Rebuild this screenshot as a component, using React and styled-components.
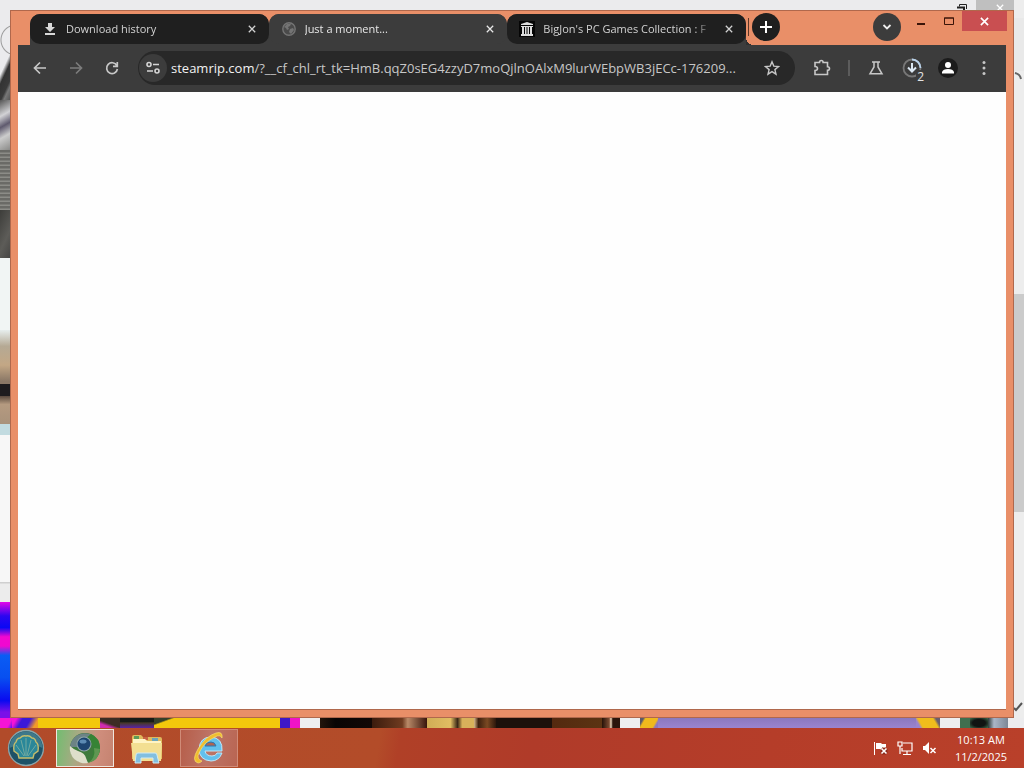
import React from 'react';
import styled, { createGlobalStyle } from 'styled-components';

const GlobalStyle = createGlobalStyle`
	* {
		box-sizing: border-box;
	}

	body {
		margin: 0;
		font-family: "Open Sans", "Noto Sans", sans-serif;
		overflow: hidden;
	}

	button {
		border: 0;
		padding: 0;
		background: none;
		color: inherit;
		font: inherit;
	}

	svg {
		display: block;
		flex: none;
	}
`;

const Desktop = styled.div`
	height: 100vh;
	display: flex;
	flex-direction: column;
`;

/* The browser window is stacked on the page behind it */
const Stage = styled.main`
	flex: 1;
	min-height: 0;
	display: grid;
	grid-template: minmax(0, 1fr) / minmax(0, 1fr);

	> * {
		grid-area: 1 / 1;
	}
`;

const Backdrop = styled.div`
	display: flex;
	flex-direction: column;
	background: #f4f4f4;
`;

const BackRow = styled.div`
	flex: 1;
	min-height: 0;
	display: flex;
	justify-content: space-between;
	background: #ebebed;
`;

const Edge = styled.div`
	width: 10px;
	display: flex;
	flex-direction: column;
`;

const Slice = styled.div`
	height: ${props => props.$height}px;
	flex: ${props => (props.$grow ? 1 : 'none')};
	background: ${props => props.$fill};
`;

const BackControls = styled.div`
	flex: 1;
	display: flex;
	justify-content: flex-end;
	align-items: flex-start;
	gap: 9px;
`;

const BackClose = styled.div`
	width: 48px;
	height: 18px;
	display: flex;
	justify-content: center;
	padding-top: 4px;
	background: #bfbfbf;
`;

const ScrollTrack = styled.div`
	width: 10px;
	margin-left: -10px;
	padding-top: 18px;
	display: flex;
	flex-direction: column;
	background: #ededed;
`;

const Thumbs = styled.div`
	height: 10px;
	display: flex;
	background: #f0f0f0;
`;

const Thumb = styled.div`
	flex: ${props => props.$size} 1 0;
	background: ${props => props.$fill};
`;

const Window = styled.section`
	position: relative;
	margin: 10px;
	display: flex;
	flex-direction: column;
	padding: 0 7px 7px;
	border: 1px solid #b0684c;
	background: #e98f68;
`;

const TitleBar = styled.header`
	height: 34px;
	display: flex;
	align-items: flex-start;
`;

const TabStrip = styled.div`
	position: relative;
	flex: 0 1 728px;
	min-width: 0;
	height: 34px;
	padding: 3px 0 0 12px;
	display: flex;

	/* Curve from the last tab into the toolbar */
	&::after {
		content: "";
		position: absolute;
		left: 100%;
		bottom: 0;
		width: 8px;
		height: 8px;
		background: radial-gradient(circle at 100% 0, transparent 8px, #303030 8px);
	}
`;

const Tab = styled.div`
	flex: 1 1 0;
	min-width: 0;
	height: 31px;
	background: #3c3c3c;
	border-radius: 10px 10px 0 0;
`;

const TabBody = styled.div`
	height: 30px;
	padding: 0 11px 0 12px;
	display: flex;
	align-items: center;
	gap: 8px;
	border-radius: 10px;
	color: ${props => (props.$active ? '#e8e8e8' : '#d2d2d2')};
	background: ${props => (props.$active ? '#3c3c3c' : '#1f1f1f')};
`;

const TabTitle = styled.button`
	flex: 1;
	min-width: 0;
	overflow: hidden;
	white-space: nowrap;
	text-align: left;
	font-size: 11px;
	line-height: 18px;
	mask-image: linear-gradient(to right, #000 calc(100% - 20px), transparent calc(100% - 4px));
`;

const CloseTab = styled.button`
	width: 12px;
	height: 16px;
	display: flex;
	align-items: center;
	justify-content: center;
`;

const Divider = styled.div`
	width: ${props => (props.$wide ? 2 : 1)}px;
	height: ${props => (props.$wide ? 16 : 18)}px;
	background: ${props => props.$fill};
`;

const StripTools = styled.div`
	height: 34px;
	padding: 0 0 2px 2px;
	display: flex;
	align-items: center;
	gap: 3px;
`;

const RoundButton = styled.button`
	width: 28px;
	height: 28px;
	display: flex;
	align-items: center;
	justify-content: center;
	border-radius: 50%;
	background: ${props => props.$fill};
`;

const Caption = styled.div`
	margin: 0 -1px 0 auto;
	display: flex;
	align-items: flex-start;
`;

const SearchTabs = styled.div`
	padding: 2px 7px 0 0;
`;

const CaptionButton = styled.button`
	width: ${props => (props.$close ? 45 : 27)}px;
	height: 20px;
	display: flex;
	align-items: center;
	justify-content: center;
	background: ${props => (props.$close ? '#c94f51' : 'none')};
`;

const Toolbar = styled.div`
	height: 47px;
	padding: 0 8px 1px;
	display: flex;
	align-items: center;
	color: #c7c7c7;
	background: #3c3c3c;
`;

const ToolButton = styled.button`
	position: relative;
	width: 28px;
	height: 28px;
	display: flex;
	align-items: center;
	justify-content: center;
	color: ${props => (props.$dim ? '#7c7c7c' : 'inherit')};
`;

const Group = styled.div`
	display: flex;
	align-items: center;
	gap: ${props => props.$gap}px;
`;

const AddressBar = styled.div`
	flex: 1;
	min-width: 0;
	height: 34px;
	margin: 0 13px 0 12px;
	padding: 0 9px 0 1px;
	display: flex;
	align-items: center;
	gap: 4px;
	border-radius: 17px;
	background: #282828;
`;

const Address = styled.a`
	flex: 1;
	min-width: 0;
	overflow: hidden;
	text-overflow: ellipsis;
	white-space: nowrap;
	text-decoration: none;
	font-size: 13px;
	line-height: 20px;
	color: #c7c7c7;
`;

const Host = styled.span`
	color: #f2f2f2;
`;

const Badge = styled.span`
	position: absolute;
	right: 1px;
	bottom: -1px;
	padding: 0 1px;
	font-size: 12px;
	line-height: 13px;
	color: #e3e3e3;
	background: #3c3c3c;
`;

const Page = styled.div`
	flex: 1;
	background: #fefefe;
	border-bottom: 1px solid #b0684c;
`;

const Taskbar = styled.footer`
	height: 40px;
	display: flex;
	align-items: center;
	padding: 0 17px 0 7px;
	color: #fff;
	background: linear-gradient(100deg, #b14b2a 0%, #b34c29 37%, #b04027 39%, #b03b29 52%, #b53d29 75%, #b9402a 100%);
`;

const TaskButton = styled.button`
	width: ${props => (props.$start ? 41 : 58)}px;
	height: 38px;
	margin-right: ${props => (props.$start ? 8 : 4)}px;
	display: flex;
	align-items: center;
	justify-content: ${props => (props.$start ? 'flex-start' : 'center')};
	border: ${props => (props.$border ? `1px solid ${props.$border}` : 0)};
	background: ${props => props.$fill || 'none'};
`;

const Tray = styled.div`
	margin-left: auto;
	display: flex;
	align-items: center;
	gap: 8px;
`;

const Clock = styled.time`
	margin-left: 10px;
	text-align: center;
	font-size: 11px;
	line-height: 17px;
`;

const Cross = ({ size, width = 1.6, color = 'currentColor' }) => (
	<svg width={size} height={size} viewBox="0 0 10 10" stroke={color} strokeWidth={width}>
		<path d="M1 1l8 8M9 1L1 9" />
	</svg>
);

const DownloadIcon = () => (
	<svg width="16" height="16" viewBox="0 0 16 16" fill="#d8d8d8">
		<path d="M6 2h4v4h3l-5 5-5-5h3zM3 12h10v2H3z" />
	</svg>
);

const GlobeIcon = () => (
	<svg width="16" height="16" viewBox="0 0 16 16">
		<circle cx="8" cy="8" r="6.2" fill="#4a4a4a" stroke="#747474" strokeWidth="1.4" />
		<path d="M3 6l3-3 4 0-1 2-2 1 1 2-2 1-1-2zM9 8l3-1 1 2-3 4-2-2z" fill="#747474" />
	</svg>
);

const ArchiveIcon = () => (
	<svg width="16" height="16" viewBox="0 0 16 16">
		<path d="M0 0h16v16H0z" fill="#050505" />
		<path d="M8 1l6 2v1H2V3zM2 5h12v1H2zM3 6h2v7H3zM6 6h1.500v7H6zM8.500 6H10v7H8.500zM11 6h2v7h-2zM2 13h12v2H2z" fill="#ddd" />
	</svg>
);

const tabs = [
	{ title: 'Download history', icon: <DownloadIcon /> },
	{ title: 'Just a moment...', icon: <GlobeIcon />, active: true },
	{ title: "BigJon's PC Games Collection : F", icon: <ArchiveIcon /> },
];

const thumbs = [
	[12, 'linear-gradient(120deg, #f514d6 70%, #5a10e8)'],
	[26, 'linear-gradient(120deg, #f514d6 15%, #3b18d8 35%, #3b18d8 60%, #f39a28 85%)'],
	[62, '#f3c80c'],
	[20, 'linear-gradient(200deg, #3b2c24 55%, #d02cae 75%)'],
	[34, 'linear-gradient(#181b18 35%, #473829 50%, #5a22a8)'],
	[20, 'linear-gradient(160deg, #36402a 35%, #f3c80c 45%)'],
	[106, '#f3c80c'],
	[10, '#3d18c8'],
	[10, '#f014c8'],
	[20, '#eeeeef'],
	[52, 'linear-gradient(90deg, #23150c, #090504 30%, #120806)'],
	[55, 'linear-gradient(90deg, #3b1b0d, #6f3b20 55%, #b98a68 65%, #38150c)'],
	[47, 'linear-gradient(90deg, #d0ad56, #e1bd62 50%, #3a2716 65%, #d8b15a 75%)'],
	[22, 'linear-gradient(90deg, #d9b88a, #3d200f 20%, #7a4922 60%, #2d170c)'],
	[56, '#1d110b'],
	[50, 'linear-gradient(90deg, #54290f, #5b3413)'],
	[18, 'linear-gradient(90deg, #241108, #7a4b31 40%, #ecd9bf 50%, #2a150c 60%)'],
	[20, '#eeeeef'],
	[18, 'linear-gradient(120deg, #5c5a6a 15%, #f0b91c 25%, #f0b91c 75%, #8c78c0 85%)'],
	[258, 'linear-gradient(#8a78be, #9a84cf)'],
	[24, 'linear-gradient(60deg, #9a84cf 15%, #f0bd1c 25%, #f0bd1c 75%, #6b6070 85%)'],
	[20, '#eeeeef'],
	[10, '#3f6f4f'],
	[18, 'radial-gradient(#101412 50%, #3f6f4f)'],
	[20, 'linear-gradient(90deg, #2c3a38, #aab6c8 30%, #7b8796)'],
	[16, '#ececee'],
];

const LeftPictures = () => (
	<Edge>
		<Slice $height={55} $fill="radial-gradient(circle at 16px 40px, #ebebed 14px, #9c9c9c 15px, #ebebed 16px)" />
		<Slice $height={45} $fill="linear-gradient(115deg, #ebebed 30%, #333 45%, #3a3a3a 70%, #777 80%, #555)" />
		<Slice $height={50} $fill="linear-gradient(150deg, #555, #d2d2d5 30%, #5f5a6e 50%, #ccc 70%, #8a8a88)" />
		<Slice $height={60} $fill="repeating-linear-gradient(#6a6a66 0 2px, #8c8c87 3px 4px)" />
		<Slice $height={48} $fill="linear-gradient(115deg, #3d3d3a, #5d5c58 60%, #474644)" />
		<Slice $height={72} $fill="#f1f5f4" />
		<Slice $height={54} $fill="linear-gradient(#e7eeed, #b5a994 30%, #c3a785 65%, #8a7766 95%)" />
		<Slice $height={12} $fill="#1d1b1e" />
		<Slice $height={28} $fill="linear-gradient(#59493e, #b59a80 30%, #a9927b)" />
		<Slice $height={11} $fill="#c2dbe0" />
		<Slice $height={147} $fill="#f7f7f7" />
		<Slice $height={20} $fill="linear-gradient(#cfcfcf 1px, #ececec 2px)" />
		<Slice $grow $fill="linear-gradient(#e408e8, #2c06f0 12%, #0a08f4 22%, #f208d0 30%, #f008d0 38%, #0a5cf4 46%, #0850f0 65%, #0a0af0 85%, #7a10e8 95%)" />
	</Edge>
);

function PageBehind() {
	return (
		<Backdrop aria-hidden="true">
			<BackRow>
				<LeftPictures />
				<BackControls>
					<svg width="10" height="12" viewBox="0 0 10 12" fill="none" stroke="#222">
						<path d="M2.500 6.500v-2h7V9" />
						<path d="M0 7.500h7V12" strokeWidth="2" />
					</svg>
					<BackClose>
						<Cross size={8} color="#fff" />
					</BackClose>
				</BackControls>
				<ScrollTrack>
					<Slice $height={53} $fill="#e9e9e9" />
					<svg width="10" height="10" viewBox="0 0 10 10" fill="none" stroke="#666" strokeWidth="2">
						<path d="M1 2q5 1 6 6" />
					</svg>
					<Slice $height={213} $fill="#ededed" />
					<Slice $height={218} $fill="#cbcbcb" />
					<Slice $height={190} $fill="#ededed" />
					<svg width="10" height="10" viewBox="0 0 10 10" fill="none" stroke="#555" strokeWidth="2">
						<path d="M0 6l2 2 6-7" />
					</svg>
				</ScrollTrack>
			</BackRow>
			<Thumbs>
				{thumbs.map(([size, fill], i) => (
					<Thumb key={i} $size={size} $fill={fill} />
				))}
			</Thumbs>
		</Backdrop>
	);
}

function BrowserTabs() {
	return (
		<TabStrip>
			{tabs.map(tab => (
				<Tab key={tab.title}>
					<TabBody $active={tab.active}>
						{tab.icon}
						<TabTitle>{tab.title}</TabTitle>
						<CloseTab aria-label="Close tab">
							<Cross size={8} />
						</CloseTab>
					</TabBody>
				</Tab>
			))}
		</TabStrip>
	);
}

function BrowserToolbar() {
	return (
		<Toolbar>
			<Group $gap={8}>
				<ToolButton aria-label="Back">
					<svg width="16" height="16" viewBox="0 0 16 16" fill="none" stroke="currentColor" strokeWidth="1.7">
						<path d="M14 8H3M8 2.500L2.500 8 8 13.500" />
					</svg>
				</ToolButton>
				<ToolButton $dim aria-label="Forward">
					<svg width="16" height="16" viewBox="0 0 16 16" fill="none" stroke="currentColor" strokeWidth="1.7">
						<path d="M2 8h11M8 2.500L13.500 8 8 13.500" />
					</svg>
				</ToolButton>
				<ToolButton aria-label="Reload">
					<svg width="16" height="16" viewBox="0 0 16 16" fill="none" stroke="currentColor" strokeWidth="1.7">
						<path d="M12.800 5.500A5.400 5.400 0 1 0 13.400 9M13.300 2v4.300H9" />
					</svg>
				</ToolButton>
			</Group>
			<AddressBar>
				<RoundButton $fill="#3c3c3c" aria-label="View site information">
					<svg width="16" height="16" viewBox="0 0 16 16" fill="none" stroke="#d5d5d5" strokeWidth="1.6">
						<circle cx="4" cy="4.500" r="2" />
						<circle cx="12" cy="11" r="2" />
						<path d="M8 4.500h6M2 11h6" />
					</svg>
				</RoundButton>
				<Address href="#">
					<Host>steamrip.com</Host>
					/?__cf_chl_rt_tk=HmB.qqZ0sEG4zzyD7moQjlnOAlxM9lurWEbpWB3jECc-176209...
				</Address>
				<ToolButton aria-label="Bookmark this tab">
					<svg width="16" height="16" viewBox="0 0 16 16" fill="none" stroke="currentColor" strokeWidth="1.4">
						<path d="M8 1.800l1.800 4.300 4.700.4-3.600 3.100 1.100 4.600L8 11.700l-4 2.500 1.100-4.600L1.500 6.500l4.700-.4z" />
					</svg>
				</ToolButton>
			</AddressBar>
			<Group $gap={12}>
				<ToolButton aria-label="Extensions">
					<svg width="18" height="18" viewBox="0 0 18 18" fill="none" stroke="currentColor" strokeWidth="1.600">
						<path d="M2 3.500h4.500q0-2 1.800-2t1.800 2h4.400v4.300q2 0 2 1.800t-2 1.800V15.500H2v-4q2.500 0 2.500-2T2 7.500z" />
					</svg>
				</ToolButton>
				<Divider $wide $fill="#5c5c5c" />
				<Group $gap={8}>
					<ToolButton aria-label="Labs">
						<svg width="16" height="16" viewBox="0 0 16 16" fill="none" stroke="currentColor" strokeWidth="1.5">
							<path d="M4 2h8M6 2v5L2 13.800h12L10 7V2" />
						</svg>
					</ToolButton>
					<ToolButton aria-label="Downloads">
						<svg width="20" height="20" viewBox="0 0 20 20" fill="none" strokeWidth="1.800">
							<circle cx="10" cy="10" r="8.500" stroke="#777" />
							<path d="M10 1.500a8.500 8.500 0 0 1 8.500 8.500" stroke="#b9d2ea" />
							<path d="M10 5v8M6 9.500l4 4 4-4" stroke="#dce8f3" strokeWidth="2" />
						</svg>
						<Badge>2</Badge>
					</ToolButton>
					<ToolButton aria-label="Profile">
						<svg width="20" height="20" viewBox="0 0 20 20">
							<circle cx="10" cy="10" r="10" fill="#1b1b1b" />
							<circle cx="10" cy="7" r="3" fill="#fff" />
							<path d="M4 15.500v-1.500q1-3 6-3t6 3v1.500z" fill="#fff" />
						</svg>
					</ToolButton>
					<ToolButton aria-label="Menu">
						<svg width="4" height="16" viewBox="0 0 4 16" fill="currentColor">
							<circle cx="2" cy="2.500" r="1.500" />
							<circle cx="2" cy="8" r="1.500" />
							<circle cx="2" cy="13.500" r="1.500" />
						</svg>
					</ToolButton>
				</Group>
			</Group>
		</Toolbar>
	);
}

const ShellIcon = () => (
	<svg width="38" height="38" viewBox="0 0 38 38" fill="none">
		<circle cx="19" cy="19" r="17.500" fill="#1e5267" stroke="#8aa5a9" strokeWidth="1.300" />
		<path d="M2.500 19a16.500 16.500 0 0 1 33 0q-16-8-33 0z" fill="#3d788a" />
		<path d="M12 29l-1-4-4-3q-1-7 2-9 1-4 4-4 3-3 6-2 3-1 6 2 3 0 4 4 3 2 2 9l-4 3-1 4z" fill="#2a8799" stroke="#c5bd6c" strokeWidth="1.400" />
		<path d="M17 27l-8-11M18 27l-4-16M19 27V9M20 27l4-16M21 27l8-11" stroke="#73aaa0" />
	</svg>
);

const ChromiumIcon = () => (
	<svg width="32" height="32" viewBox="0 0 32 32">
		<circle cx="16" cy="16" r="15" fill="#3d7a3c" />
		<path d="M1 15A15 15 0 0 1 23 3l-1 7q-7-5-13 5z" fill="#6c8385" />
		<path d="M1 14a15 15 0 0 0 18 17l-2-5q-1-5-8-7-5-2-8-5z" fill="#dedfcb" />
		<path d="M22 2q9 4 9 14T19 31q7-6 5-16-1-6-8-8z" fill="#368335" />
		<path d="M19 31q8-5 6-15l6 1q-1 12-12 14z" fill="#5e9651" />
		<circle cx="15" cy="12" r="7.500" fill="#8fa5a8" />
		<circle cx="15" cy="12" r="6.500" fill="#1d456f" />
		<ellipse cx="14" cy="9.500" rx="3.500" ry="2" fill="#5c8bb3" />
	</svg>
);

const FolderIcon = () => (
	<svg width="34" height="32" viewBox="0 0 34 32">
		<path d="M2 5q0-2 2-2h7l2 2h17q2 0 2 2v20H2z" fill="#dfb95e" />
		<path d="M4 4h5v3H4z" fill="#5d9b5a" />
		<path d="M13 5h5v3h-5z" fill="#c86244" />
		<path d="M22 6h6v3h-6z" fill="#6aa4ba" />
		<path d="M3 7h12l2 2h14v3H3z" fill="#fff4c4" />
		<path d="M1 11h31l-1 18H3z" fill="#f3df92" />
		<path d="M5 31l1-8q0-2 2-2h17q2 0 2 2l2 8h-6v-5H11v5z" fill="#82bfe0" stroke="#d0ebf4" />
	</svg>
);

const ExplorerIcon = () => (
	<svg width="34" height="34" viewBox="0 0 34 34" fill="none">
		<path d="M30 20H13q1 5 7 5 4 0 5-3h5q-3 8-11 8-12-1-12-12Q8 6 19 6q12 1 11 14z" fill="#63c0ed" stroke="#bfe8fa" />
		<path d="M13 15q1-4 6-4 4 0 5 4z" fill="#ae6454" stroke="#2879b4" />
		<path d="M6 32q-7-2 0-14Q14 5 24 2q7-2 6 5-2-4-7-1Q12 11 7 22q-3 6 3 8-2 2-4 2z" fill="#f0bd2d" stroke="#f6dc76" strokeWidth=".7" />
	</svg>
);

function WindowsTaskbar() {
	return (
		<Taskbar>
			<TaskButton $start aria-label="Start">
				<ShellIcon />
			</TaskButton>
			<TaskButton $border="#efe6de" $fill="linear-gradient(100deg, #72bd70, #a7aa83 35%, #cf8d7c 70%, #c58370)" aria-label="Chromium">
				<ChromiumIcon />
			</TaskButton>
			<TaskButton aria-label="File Explorer">
				<FolderIcon />
			</TaskButton>
			<TaskButton $border="#d08b78" $fill="linear-gradient(100deg, #b65d49, #bd7567 50%, #b96552)" aria-label="Internet Explorer">
				<ExplorerIcon />
			</TaskButton>
			<Tray>
				<svg width="16" height="16" viewBox="0 0 16 16">
					<path d="M1 2h1v13H1zM3 3h5l1 1h4v6H8L7 9H3z" fill="#fff" />
					<path d="M8.500 8.500l5 5M13.500 8.500l-5 5" stroke="#8d2a1c" strokeWidth="4" />
					<path d="M8.500 8.500l5 5M13.500 8.500l-5 5" stroke="#fff" strokeWidth="1.600" />
				</svg>
				<svg width="16" height="16" viewBox="0 0 16 16" fill="none" stroke="#fff" strokeWidth="1.200">
					<path d="M6 3h9v8H5V8M10 11v3M6 14.500h8M1 2h4v4H1zM3 6v8" />
				</svg>
				<svg width="16" height="16" viewBox="0 0 16 16">
					<path d="M2 6h2l4-4v12l-4-4H2z" fill="#fff" />
					<path d="M9.500 8l5 5M14.500 8l-5 5" stroke="#fff" strokeWidth="1.500" />
				</svg>
				<Clock>
					10:13 AM
					<br />
					11/2/2025
				</Clock>
			</Tray>
		</Taskbar>
	);
}

class App extends React.Component {
	render() {
		return (
			<Desktop>
				<GlobalStyle />
				<Stage>
					<PageBehind />
					<Window>
						<TitleBar>
							<BrowserTabs />
							<StripTools>
								<Divider $fill="#5e3828" />
								<RoundButton $fill="#1f1f1f" aria-label="New tab">
									<svg width="14" height="14" viewBox="0 0 14 14" stroke="#fff" strokeWidth="2">
										<path d="M7 1v12M1 7h12" />
									</svg>
								</RoundButton>
							</StripTools>
							<Caption>
								<SearchTabs>
									<RoundButton $fill="#3c3c3c" aria-label="Search tabs">
										<svg width="10" height="10" viewBox="0 0 10 10" fill="none" stroke="#eee" strokeWidth="1.800">
											<path d="M1.500 3L5 6.500 8.500 3" />
										</svg>
									</RoundButton>
								</SearchTabs>
								<CaptionButton aria-label="Minimize">
									<svg width="9" height="10" viewBox="0 0 9 10">
										<path d="M0 7h8v2H0z" fill="#3a1408" />
									</svg>
								</CaptionButton>
								<CaptionButton aria-label="Maximize">
									<svg width="10" height="8" viewBox="0 0 10 8" fill="none" stroke="#3a1408">
										<path d="M.5 1h9v6.500h-9zM0 1h10" />
									</svg>
								</CaptionButton>
								<CaptionButton $close aria-label="Close">
									<Cross size={9} width={1.8} color="#fff" />
								</CaptionButton>
							</Caption>
						</TitleBar>
						<BrowserToolbar />
						<Page />
					</Window>
				</Stage>
				<WindowsTaskbar />
			</Desktop>
		);
	}
}

export default App;
